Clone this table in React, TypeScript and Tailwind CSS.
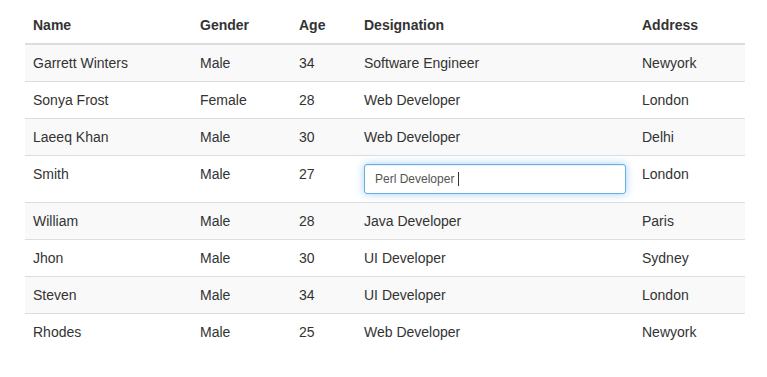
type Employee = {
  name: string;
  gender: string;
  age: number;
  designation: string;
  address: string;
  editing?: boolean;
};

const employees: Employee[] = [
  { name: "Garrett Winters", gender: "Male", age: 34, designation: "Software Engineer", address: "Newyork" },
  { name: "Sonya Frost", gender: "Female", age: 28, designation: "Web Developer", address: "London" },
  { name: "Laeeq Khan", gender: "Male", age: 30, designation: "Web Developer", address: "Delhi" },
  { name: "Smith", gender: "Male", age: 27, designation: "Perl Developer", address: "London", editing: true },
  { name: "William", gender: "Male", age: 28, designation: "Java Developer", address: "Paris" },
  { name: "Jhon", gender: "Male", age: 30, designation: "UI Developer", address: "Sydney" },
  { name: "Steven", gender: "Male", age: 34, designation: "UI Developer", address: "London" },
  { name: "Rhodes", gender: "Male", age: 25, designation: "Web Developer", address: "Newyork" },
];

function EditCell({ value }: { value: string }) {
  return (
    <div className="flex h-[30px] w-full items-center rounded-[3px] border border-[#66afe9] bg-white px-[10px] text-[12px] text-[#555] shadow-[inset_0_1px_1px_rgba(0,0,0,0.075),0_0_8px_rgba(102,175,233,0.6)]">
      <span>{value}</span>
      <span className="ml-[4px] inline-block h-[14px] w-px bg-[#333]" />
    </div>
  );
}

export default function App() {
  const td = "px-2 py-2 align-top leading-5 border-t border-[#ddd]";
  return (
    <div className="min-h-screen bg-white pt-[7px] pl-[25px] font-['Liberation_Sans',Arial,sans-serif] text-[14px] text-[#333]">
      <table className="w-[720px] border-collapse text-left">
        <thead>
          <tr>
            <th className="w-[167px] border-b-2 border-[#ddd] px-2 py-2 align-bottom leading-5 font-bold">Name</th>
            <th className="w-[99px] border-b-2 border-[#ddd] px-2 py-2 align-bottom leading-5 font-bold">Gender</th>
            <th className="w-[65px] border-b-2 border-[#ddd] px-2 py-2 align-bottom leading-5 font-bold">Age</th>
            <th className="w-[278px] border-b-2 border-[#ddd] px-2 py-2 align-bottom leading-5 font-bold">Designation</th>
            <th className="border-b-2 border-[#ddd] px-2 py-2 align-bottom leading-5 font-bold">Address</th>
          </tr>
        </thead>
        <tbody>
          {employees.map((e, i) => (
            <tr key={e.name} className={i % 2 === 0 ? "bg-[#f9f9f9]" : "bg-white"}>
              <td className={td}>{e.name}</td>
              <td className={td}>{e.gender}</td>
              <td className={td}>{e.age}</td>
              <td className={td}>{e.editing ? <EditCell value={e.designation} /> : e.designation}</td>
              <td className={td}>{e.address}</td>
            </tr>
          ))}
        </tbody>
      </table>
    </div>
  );
}
